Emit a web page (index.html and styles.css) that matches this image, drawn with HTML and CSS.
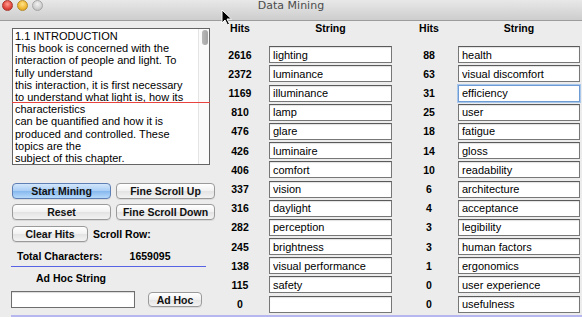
FILE: index.html
```html
<!DOCTYPE html>
<html lang="en">
<head>
    <meta charset="UTF-8">
    <title>Data Mining</title>
    <link rel="stylesheet" href="styles.css">
</head>
<body>

<div class="window">
    <div class="titlebar">
        <div class="lights">
            <span class="light red"></span>
            <span class="light yellow"></span>
            <span class="light gray"></span>
        </div>
        <div class="title">Data Mining</div>
        <div></div>
    </div>

    <div class="main">
        <div class="left">
            <div class="textarea">
                <div class="text">
                    1.1 INTRODUCTION<br>
                    This book is concerned with the<br>
                    interaction of people and light. To<br>
                    fully understand<br>
                    this interaction, it is first necessary<br>
                    to understand what light is, how its<br>
                    characteristics<br>
                    can be quantified and how it is<br>
                    produced and controlled. These<br>
                    topics are the<br>
                    subject of this chapter.
                </div>
                <div class="track"><div class="thumb"></div></div>
                <div class="marker"></div>
            </div>

            <div class="btnrow first">
                <button class="btn default">Start Mining</button>
                <button class="btn">Fine Scroll Up</button>
            </div>
            <div class="btnrow">
                <button class="btn">Reset</button>
                <button class="btn">Fine Scroll Down</button>
            </div>
            <div class="btnrow third">
                <button class="btn small">Clear Hits</button>
                <span class="label">Scroll Row:</span>
            </div>

            <div class="totals">
                <span class="label">Total Characters:</span>
                <span class="label count">1659095</span>
            </div>
            <div class="rule"></div>
            <div class="label adhoc-title">Ad Hoc String</div>
            <div class="adhoc">
                <input type="text" class="adhoc-input">
                <button class="btn adhoc-btn">Ad Hoc</button>
            </div>
        </div>

        <div class="right" id="table">
            <div class="head hits1">Hits</div>
            <div class="head">String</div>
            <div class="head hits2">Hits</div>
            <div class="head">String</div>
        </div>
    </div>

    <div class="footline"></div>

    <svg class="cursor" width="12" height="17" viewBox="0 0 12 17">
        <path d="M1 1 L1 14 L4 11 L6.5 16 L8.5 15 L6 10 L10.5 10 Z" fill="#000" stroke="#fff" stroke-width="1"/>
    </svg>
</div>

<script>
    const rows = [
        ['2616', 'lighting', '88', 'health'],
        ['2372', 'luminance', '63', 'visual discomfort'],
        ['1169', 'illuminance', '31', 'efficiency'],
        ['810', 'lamp', '25', 'user'],
        ['476', 'glare', '18', 'fatigue'],
        ['426', 'luminaire', '14', 'gloss'],
        ['406', 'comfort', '10', 'readability'],
        ['337', 'vision', '6', 'architecture'],
        ['316', 'daylight', '4', 'acceptance'],
        ['282', 'perception', '3', 'legibility'],
        ['245', 'brightness', '3', 'human factors'],
        ['138', 'visual performance', '1', 'ergonomics'],
        ['115', 'safety', '0', 'user experience'],
        ['0', '', '0', 'usefulness']
    ];

    const table = document.getElementById('table');
    rows.forEach(r => {
        table.innerHTML += `<div class="hits hits1">${r[0]}</div>`
            + `<input class="field" type="text" value="${r[1]}">`
            + `<div class="hits hits2">${r[2]}</div>`
            + `<input class="field${r[3] === 'efficiency' ? ' focused' : ''}" type="text" value="${r[3]}">`;
    });
</script>

</body>
</html>
```

FILE: styles.css
```css
body {
    margin: 0;
    font-family: "Liberation Sans", Arial, sans-serif;
    font-size: 11px;
    color: #000;
    background-color: #ececec;
}
.window {
    position: relative;
    width: 582px;
    height: 317px;
    overflow: hidden;
    background-color: #ececec;
}
.titlebar {
    height: 20px;
    display: grid;
    grid-template-columns: 1fr auto 1fr;
    background: linear-gradient(#e8e8e8, #cdcdcd);
    border-bottom: 1px solid #9c9c9c;
}
.lights {
    display: flex;
    gap: 4px;
    padding-left: 2px;
}
.light {
    width: 11px;
    height: 11px;
    border-radius: 50%;
    box-sizing: border-box;
}
.light.red {
    background: radial-gradient(circle at 50% 35%, #ff9d92, #e0453c 60%, #b8342d);
    border: 1px solid #a8362f;
}
.light.yellow {
    background: radial-gradient(circle at 50% 35%, #ffe28a, #f0b733 60%, #c98f1f);
    border: 1px solid #b58a28;
}
.light.gray {
    background: radial-gradient(circle at 50% 35%, #f2f2f2, #cfcfcf 60%, #b3b3b3);
    border: 1px solid #a5a5a5;
}
.title {
    font-family: "DejaVu Sans", sans-serif;
    font-size: 11px;
    line-height: 12px;
    color: #4c4c4c;
}
.main {
    display: flex;
    height: 294px;
}

/* left side */
.left {
    width: 205px;
    padding-left: 12px;
    padding-top: 7px;
}
.textarea {
    position: relative;
    display: flex;
    width: 198px;
    height: 137px;
    box-sizing: border-box;
    border: 1px solid #646464;
    background-color: #fff;
}
.text {
    flex: 1;
    padding: 1px 2px;
    line-height: 12.2px;
    white-space: nowrap;
    overflow: hidden;
}
.track {
    width: 10px;
    border-left: 1px solid #e4e4e4;
    background-color: #fbfbfb;
}
.thumb {
    width: 6px;
    height: 15px;
    margin: 1px 0 0 3px;
    border-radius: 3px;
    background: linear-gradient(90deg, #b9b9b9, #a4a4a4);
}
.marker {
    position: absolute;
    left: -1px;
    right: -1px;
    top: 73px;
    height: 1px;
    background-color: #e8433f;
}
.btnrow {
    display: flex;
    align-items: center;
    gap: 5px;
    margin-top: 5px;
}
.btnrow.first {
    margin-top: 18px;
}
.btnrow.third {
    margin-top: 6px;
}
.btn {
    width: 99px;
    height: 16px;
    padding: 0;
    font-family: "Liberation Sans", Arial, sans-serif;
    font-size: 10.5px;
    font-weight: bold;
    color: #111;
    border: 1px solid #9a9a9a;
    border-radius: 4px;
    background: linear-gradient(#ffffff, #f1f1f1 50%, #e3e3e3 51%, #f3f3f3);
    box-shadow: 0 1px 0 rgba(0, 0, 0, 0.08);
}
.btn.default {
    border-color: #5d7fb3;
    background: linear-gradient(#d3e6fb, #a8cdf4 50%, #86b8ee 51%, #b7dafa);
}
.btn.small {
    width: 76px;
}
.label {
    font-weight: bold;
    font-size: 10.5px;
}
.totals {
    display: flex;
    margin-top: 8px;
    padding-left: 5px;
    line-height: 12px;
}
.count {
    margin-left: 27px;
}
.rule {
    width: 195px;
    height: 1px;
    margin: 4px 0 0 -1px;
    background-color: #5862e4;
}
.adhoc-title {
    margin-top: 5px;
    padding-left: 24px;
    line-height: 12px;
}
.adhoc {
    display: flex;
    align-items: center;
    margin: 7px 0 0 -1px;
}
.adhoc-input {
    width: 124px;
    height: 17px;
    box-sizing: border-box;
    border: 1px solid #6e6e6e;
    box-shadow: inset 0 1px 1px rgba(0, 0, 0, 0.15);
    padding: 0 3px;
}
.adhoc-btn {
    width: 54px;
    height: 15px;
    margin-left: 13px;
}

/* right side: hits table */
.right {
    display: grid;
    grid-template-columns: 52px 123px 66px 122px;
    grid-template-rows: 23px;
    grid-auto-rows: 17px;
    row-gap: 2.2px;
    align-items: center;
    align-content: start;
}
.head {
    align-self: start;
    text-align: center;
    font-weight: bold;
    font-size: 10.5px;
    line-height: 14px;
}
.hits {
    text-align: center;
    font-weight: bold;
    font-size: 10.5px;
}
.hits1 {
    padding-right: 6px;
}
.hits2 {
    padding-left: 8px;
}
.field {
    height: 17px;
    box-sizing: border-box;
    margin: 0;
    padding: 0 3px;
    font-family: "Liberation Sans", Arial, sans-serif;
    font-size: 11px;
    color: #000;
    background-color: #fff;
    border: 1px solid #777;
    border-top-color: #5a5a5a;
    box-shadow: inset 0 1px 1px rgba(0, 0, 0, 0.12);
}
.field.focused {
    border-color: #6f9bd4;
    box-shadow: 0 0 0 1px #a9c8ec;
}
.footline {
    height: 2px;
    margin-left: 11px;
    background-color: #b7b7f0;
}
.cursor {
    position: absolute;
    left: 221px;
    top: 9px;
}
```
